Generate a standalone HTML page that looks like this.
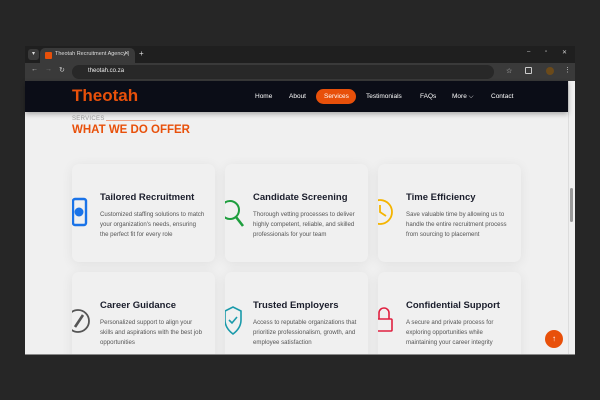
<!DOCTYPE html>
<html><head><style>
*{margin:0;padding:0;box-sizing:border-box}
body{width:600px;height:400px;background:#262626;font-family:"Liberation Sans",sans-serif;position:relative;overflow:hidden}
.a{position:absolute}
.win{left:25px;top:46px;width:550px;height:309px;background:#1f1f1f;overflow:hidden}
.nav a{position:absolute;color:#fff;font-size:6.5px;top:93px}
.content{position:absolute;left:25px;top:81px;width:543px;height:273px;background:#f0f0f0;overflow:hidden}
.card{position:absolute;width:143px;height:98px;background:#f0f0f0;border-radius:7px;box-shadow:0 2px 12px rgba(0,0,0,.07);overflow:hidden}
.card h3{position:absolute;left:28px;top:28px;font-size:9.5px;color:#1a1d2b;font-weight:bold;white-space:nowrap}
.card p{position:absolute;left:28px;top:46px;width:106px;font-size:6.1px;line-height:9.8px;color:#555}
.card svg{position:absolute;left:0;top:34px;overflow:visible}
</style></head><body>
<div class="a win">
 <div class="a" style="left:3px;top:3px;width:11px;height:11px;background:#3a3a3a;border-radius:3px;color:#ddd;font-size:6px;text-align:center;line-height:11px">▾</div>
 <div class="a" style="left:15px;top:2px;width:95px;height:16px;background:#3a3a3a;border-radius:5px 5px 0 0"></div>
 <div class="a" style="left:20px;top:6px;width:7px;height:7px;background:#e8500a;border-radius:1px"></div>
 <div class="a" style="left:30px;top:5px;color:#ddd;font-size:5.5px;white-space:nowrap">Theotah Recruitment Agency |</div>
 <div class="a" style="left:99px;top:4px;color:#ccc;font-size:6px">✕</div>
 <div class="a" style="left:114px;top:3px;color:#ddd;font-size:8px">+</div>
 <div class="a" style="left:502px;top:3px;color:#ccc;font-size:6px">–</div>
 <div class="a" style="left:520px;top:3px;color:#ccc;font-size:6px">▫</div>
 <div class="a" style="left:537px;top:3px;color:#ccc;font-size:6px">✕</div>
 <div class="a" style="left:0;top:17px;width:550px;height:18px;background:#3a3a3a"></div>
 <div class="a" style="left:6px;top:20px;color:#ccc;font-size:7px">←</div>
 <div class="a" style="left:20px;top:20px;color:#777;font-size:7px">→</div>
 <div class="a" style="left:34px;top:20px;color:#ccc;font-size:7px">↻</div>
 <div class="a" style="left:47px;top:19px;width:422px;height:14px;background:#282828;border-radius:7px"></div>
 <div class="a" style="left:63px;top:22px;color:#eee;font-size:6px">theotah.co.za</div>
 <div class="a" style="left:481px;top:21px;color:#ccc;font-size:7px">☆</div>
 <div class="a" style="left:500px;top:21px;width:7px;height:7px;border:1px solid #ccc;border-radius:1px"></div>
 <div class="a" style="left:521px;top:21px;width:8px;height:8px;background:#6b4a1a;border-radius:50%"></div>
 <div class="a" style="left:539px;top:20px;color:#ccc;font-size:7px">⋮</div>
 <div class="a" style="left:543px;top:35px;width:7px;height:274px;background:#f0f0f0;border-left:1px solid #ddd"></div>
 <div class="a" style="left:545px;top:142px;width:3px;height:34px;background:#999;border-radius:2px"></div>
</div>
<div class="content">
<div class="card" style="left:47px;top:83px"><svg width="20" height="30"><rect x="1" y="1" width="13" height="26" rx="2" fill="none" stroke="#1a73e8" stroke-width="2.4"/><circle cx="7" cy="14" r="4.5" fill="#1a73e8"/></svg><h3>Tailored Recruitment</h3><p>Customized staffing solutions to match your organization's needs, ensuring the perfect fit for every role</p></div>
<div class="card" style="left:200px;top:83px"><svg width="26" height="32"><circle cx="5" cy="12" r="9" fill="none" stroke="#1e9e3e" stroke-width="2"/><path d="M11 19 L18 28" stroke="#1e9e3e" stroke-width="2.6"/></svg><h3>Candidate Screening</h3><p>Thorough vetting processes to deliver highly competent, reliable, and skilled professionals for your team</p></div>
<div class="card" style="left:353px;top:83px"><svg width="26" height="32"><circle cx="2" cy="14" r="12" fill="none" stroke="#f4b400" stroke-width="1.8"/><path d="M2 7 V14 L8 18" fill="none" stroke="#f4b400" stroke-width="1.8"/></svg><h3>Time Efficiency</h3><p>Save valuable time by allowing us to handle the entire recruitment process from sourcing to placement</p></div>
<div class="card" style="left:47px;top:191px"><svg width="26" height="32"><circle cx="6" cy="15" r="11" fill="none" stroke="#555" stroke-width="1.8"/><path d="M11 9 L3 21" stroke="#555" stroke-width="2.6"/></svg><h3>Career Guidance</h3><p>Personalized support to align your skills and aspirations with the best job opportunities</p></div>
<div class="card" style="left:200px;top:191px"><svg width="26" height="32"><path d="M0 5 L8 1 L16 5 V14 C16 21 12 25 8 28 C4 25 0 21 0 14Z" fill="none" stroke="#1a9aaa" stroke-width="1.6"/><path d="M4 14 L7 17 L12 11" fill="none" stroke="#1a9aaa" stroke-width="1.6"/></svg><h3>Trusted Employers</h3><p>Access to reputable organizations that prioritize professionalism, growth, and employee satisfaction</p></div>
<div class="card" style="left:353px;top:191px"><svg width="26" height="32"><path d="M1 13 V7 A5 5 0 0 1 11 7 V13" fill="none" stroke="#e02040" stroke-width="1.6"/><rect x="-2" y="13" width="16" height="12" rx="1" fill="none" stroke="#e02040" stroke-width="1.6"/></svg><h3>Confidential Support</h3><p>A secure and private process for exploring opportunities while maintaining your career integrity</p></div>
</div>
<div class="a" style="left:25px;top:81px;width:543px;height:31px;background:#0b0d17;box-shadow:0 2px 5px rgba(0,0,0,.3)"></div>
<div class="a" style="left:72px;top:86px;color:#e8500a;font-size:17px;font-weight:bold">Theotah</div>
<div class="a" style="left:316px;top:89px;width:40px;height:15px;background:#e8500a;border-radius:8px"></div>
<div class="nav">
<a style="left:255px">Home</a><a style="left:289px">About</a><a style="left:324px">Services</a><a style="left:366px">Testimonials</a><a style="left:420px">FAQs</a><a style="left:452px">More ⌵</a><a style="left:491px">Contact</a>
</div>
<div class="a" style="left:72px;top:116px;color:#999;font-size:6px;letter-spacing:.3px">SERVICES</div>
<div class="a" style="left:106px;top:120px;width:50px;height:1px;background:#f0a080"></div>
<div class="a" style="left:72px;top:124px;color:#e8500a;font-size:11.5px;font-weight:bold">WHAT WE DO OFFER</div>
<div class="a" style="left:545px;top:330px;width:18px;height:18px;background:#e8500a;border-radius:50%;color:#fff;font-size:8px;text-align:center;line-height:18px">↑</div>
<div class="a" style="left:25px;top:354px;width:550px;height:1px;background:#888"></div>
</body></html>
